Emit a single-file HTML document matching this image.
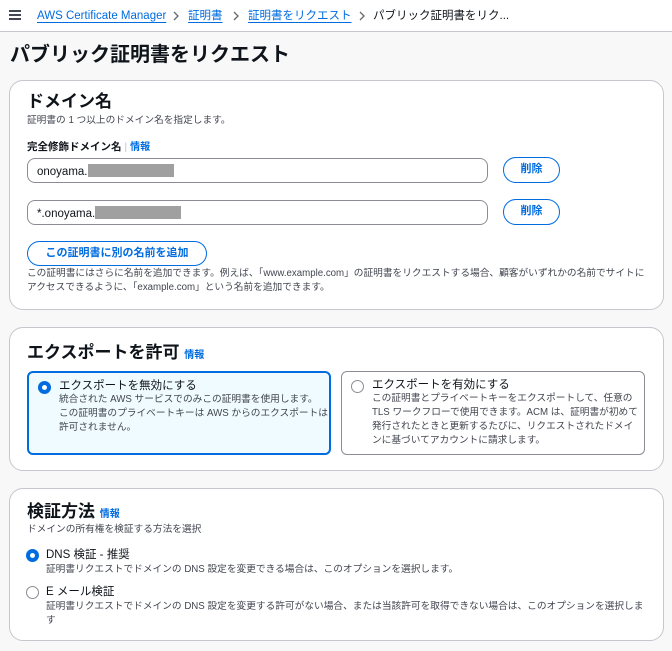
<!DOCTYPE html><html><head><meta charset="utf-8"><style>
*{box-sizing:border-box;margin:0;padding:0}
body{width:672px;height:651px;overflow:hidden;background:#f8f8f8;font-family:"Liberation Sans","Noto Sans CJK JP",sans-serif;color:#0f141a;position:relative}
.a{position:absolute;white-space:nowrap}
.hdr{left:0;top:0;width:672px;height:32px;background:#fff;border-bottom:1px solid #c6c6cd;font-size:11.5px;line-height:14px}
.lk{color:#006ce0;text-decoration:underline;text-underline-offset:3px}
.card{background:#fff;border:1px solid #c6c6cd;border-radius:14px;left:9px;width:655px}
.s{font-size:9.7px;color:#424650;line-height:14px}
.inp{left:27px;width:461px;height:25px;border:1px solid #8c8c94;border-radius:8px;background:#fff;font-size:11.5px;padding:5px 9px;line-height:14px}
.gray{display:inline-block;background:#a0a0a0;height:13px;vertical-align:-2px}
.btn{border:1.5px solid #006ce0;border-radius:14px;color:#006ce0;font-weight:bold;font-size:11px;text-align:center;background:#fff}
.info{color:#006ce0;font-size:10px;font-weight:bold}
.h{font-size:17px;font-weight:bold;line-height:20px}
.tile{border-radius:6px;top:371px;height:84px;padding:6px 8px 0 30px;line-height:14px}
.r{position:absolute;left:9px;top:8px;width:13px;height:13px;border-radius:50%}
.chev{position:absolute;top:11px}
</style></head><body>
<div class="a hdr">
 <div class="a" style="left:9px;top:10px;width:12px;height:2px;background:#424650;box-shadow:0 4px 0 #424650,0 8px 0 #424650"></div>
 <span class="a lk" style="left:37px;top:9px">AWS Certificate Manager</span>
 <svg class="chev" style="left:173px" width="6" height="10"><path d="M1 1l4 4-4 4" fill="none" stroke="#656871" stroke-width="1.3"/></svg>
 <span class="a lk" style="left:188px;top:9px">証明書</span>
 <svg class="chev" style="left:233px" width="6" height="10"><path d="M1 1l4 4-4 4" fill="none" stroke="#656871" stroke-width="1.3"/></svg>
 <span class="a lk" style="left:248px;top:9px">証明書をリクエスト</span>
 <svg class="chev" style="left:359px" width="6" height="10"><path d="M1 1l4 4-4 4" fill="none" stroke="#656871" stroke-width="1.3"/></svg>
 <span class="a" style="left:373px;top:9px">パブリック証明書をリク...</span>
</div>
<div class="a" style="left:10px;top:42px;font-size:20px;font-weight:bold;line-height:26px">パブリック証明書をリクエスト</div>

<div class="a card" style="top:80px;height:230px"></div>
<div class="a h" style="left:27px;top:92px">ドメイン名</div>
<div class="a s" style="left:27px;top:114px">証明書の 1 つ以上のドメイン名を指定します。</div>
<div class="a" style="left:27px;top:140px;font-size:10.5px;font-weight:bold;line-height:14px">完全修飾ドメイン名 <span style="color:#c6c6cd;font-weight:normal">|</span> <span class="info">情報</span></div>
<div class="a inp" style="top:158px">onoyama.<span class="gray" style="width:86px"></span></div>
<div class="a btn" style="left:503px;top:157px;width:57px;height:26px;line-height:23px">削除</div>
<div class="a inp" style="top:200px">*.onoyama.<span class="gray" style="width:86px"></span></div>
<div class="a btn" style="left:503px;top:199px;width:57px;height:26px;line-height:23px">削除</div>
<div class="a btn" style="left:27px;top:241px;width:180px;height:25px;line-height:22px">この証明書に別の名前を追加</div>
<div class="a s" style="left:27px;top:267px">この証明書にはさらに名前を追加できます。例えば、「www.example.com」の証明書をリクエストする場合、顧客がいずれかの名前でサイトに<br>アクセスできるように、「example.com」という名前を追加できます。</div>

<div class="a card" style="top:327px;height:144px"></div>
<div class="a h" style="left:27px;top:343px">エクスポートを許可 <span class="info">情報</span></div>
<div class="a tile" style="left:27px;width:304px;background:#f0fbff;border:2px solid #006ce0">
 <div class="r" style="border:4px solid #006ce0;background:#fff"></div>
 <div style="font-size:11.5px">エクスポートを無効にする</div>
 <div class="s">統合された AWS サービスでのみこの証明書を使用します。<br>この証明書のプライベートキーは AWS からのエクスポートは<br>許可されません。</div></div>
<div class="a tile" style="left:341px;width:304px;border:1px solid #8c8c94">
 <div class="r" style="border:1px solid #8c8c94"></div>
 <div style="font-size:11.5px">エクスポートを有効にする</div>
 <div class="s">この証明書とプライベートキーをエクスポートして、任意の<br>TLS ワークフローで使用できます。ACM は、証明書が初めて<br>発行されたときと更新するたびに、リクエストされたドメイ<br>ンに基づいてアカウントに請求します。</div></div>

<div class="a card" style="top:488px;height:153px"></div>
<div class="a h" style="left:27px;top:502px">検証方法 <span class="info">情報</span></div>
<div class="a s" style="left:27px;top:523px">ドメインの所有権を検証する方法を選択</div>
<div class="a" style="left:26px;top:549px;width:13px;height:13px;border-radius:50%;border:4px solid #006ce0"></div>
<div class="a" style="left:46px;top:548px;font-size:11.5px;line-height:14px">DNS 検証 - 推奨</div>
<div class="a s" style="left:46px;top:563px">証明書リクエストでドメインの DNS 設定を変更できる場合は、このオプションを選択します。</div>
<div class="a" style="left:26px;top:586px;width:13px;height:13px;border-radius:50%;border:1px solid #8c8c94"></div>
<div class="a" style="left:46px;top:585px;font-size:11.5px;line-height:14px">E メール検証</div>
<div class="a s" style="left:46px;top:600px">証明書リクエストでドメインの DNS 設定を変更する許可がない場合、または当該許可を取得できない場合は、このオプションを選択しま<br>す</div>
</body></html>
